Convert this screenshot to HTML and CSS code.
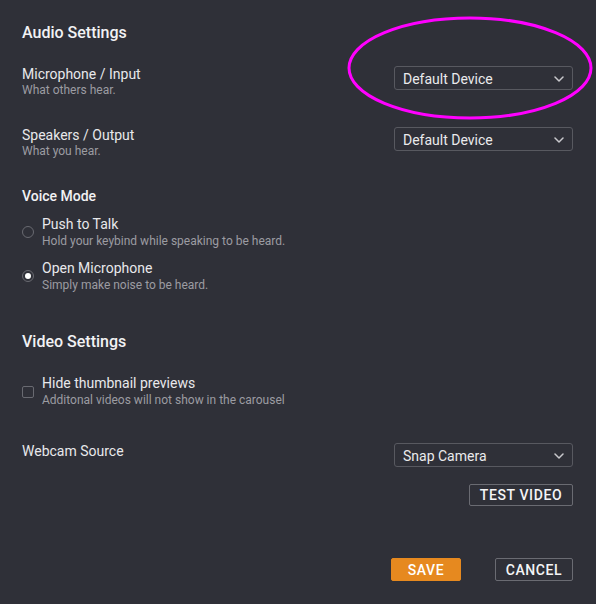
FILE: index.html
```html
<!DOCTYPE html>
<html lang="en">
<head>
<meta charset="utf-8">
<title>Settings</title>
<link rel="stylesheet" href="styles.css">
</head>
<body>
<main class="settings">
  <h2 class="section-title">Audio Settings</h2>

  <div class="field-row first-row">
    <div class="field-text">
      <div class="field-label">Microphone / Input</div>
      <div class="field-help">What others hear.</div>
    </div>
    <div class="select">
      <span class="select-value">Default Device</span>
      <svg class="chevron" width="10" height="6" viewBox="0 0 10 6"><polyline points="1,1 5,5 9,1" fill="none" stroke="#c9c9cd" stroke-width="1.5" stroke-linecap="round" stroke-linejoin="round"/></svg>
    </div>
  </div>

  <div class="field-row">
    <div class="field-text">
      <div class="field-label">Speakers / Output</div>
      <div class="field-help">What you hear.</div>
    </div>
    <div class="select">
      <span class="select-value">Default Device</span>
      <svg class="chevron" width="10" height="6" viewBox="0 0 10 6"><polyline points="1,1 5,5 9,1" fill="none" stroke="#c9c9cd" stroke-width="1.5" stroke-linecap="round" stroke-linejoin="round"/></svg>
    </div>
  </div>

  <h3 class="group-title">Voice Mode</h3>
  <div class="option-list">
    <div class="option">
      <span class="radio"></span>
      <div class="field-text">
        <div class="field-label">Push to Talk</div>
        <div class="field-help">Hold your keybind while speaking to be heard.</div>
      </div>
    </div>
    <div class="option">
      <span class="radio checked"></span>
      <div class="field-text">
        <div class="field-label">Open Microphone</div>
        <div class="field-help">Simply make noise to be heard.</div>
      </div>
    </div>
  </div>

  <h2 class="section-title video-title">Video Settings</h2>
  <div class="option checkbox-option">
    <span class="checkbox"></span>
    <div class="field-text">
      <div class="field-label">Hide thumbnail previews</div>
      <div class="field-help">Additonal videos will not show in the carousel</div>
    </div>
  </div>

  <div class="field-row webcam-row">
    <div class="field-text">
      <div class="field-label">Webcam Source</div>
    </div>
    <div class="select">
      <span class="select-value">Snap Camera</span>
      <svg class="chevron" width="10" height="6" viewBox="0 0 10 6"><polyline points="1,1 5,5 9,1" fill="none" stroke="#c9c9cd" stroke-width="1.5" stroke-linecap="round" stroke-linejoin="round"/></svg>
    </div>
  </div>

  <div class="test-row">
    <button class="btn btn-outline btn-test">TEST VIDEO</button>
  </div>

  <div class="actions">
    <button class="btn btn-save">SAVE</button>
    <button class="btn btn-outline btn-cancel">CANCEL</button>
  </div>
</main>

<svg class="annotation" width="250" height="106" viewBox="0 0 250 106">
  <ellipse cx="124" cy="52" rx="121" ry="50" fill="none" stroke="#ff00ff" stroke-width="3"/>
</svg>
</body>
</html>
```

FILE: styles.css
```css
* {
  box-sizing: border-box;
}

html, body {
  margin: 0;
  padding: 0;
  background: #2f3038;
  height: 100%;
}

body {
  font-family: Roboto, "Liberation Sans", sans-serif;
  color: #e6e6e9;
  position: relative;
}

.settings {
  padding: 23px 23px 0 22px;
  display: flex;
  flex-direction: column;
}

.section-title {
  margin: 0;
  font-size: 16px;
  line-height: 20px;
  font-weight: 500;
  color: #f2f2f4;
}

.video-title {
  margin-top: 40px;
}

.group-title {
  margin: 30px 0 0;
  font-size: 14px;
  line-height: 16px;
  font-weight: 500;
  color: #f2f2f4;
}

.field-row {
  display: flex;
  justify-content: space-between;
  align-items: flex-start;
  margin-top: 30px;
}

.first-row {
  margin-top: 23px;
}

.webcam-row {
  margin-top: 36px;
}

.field-label {
  font-size: 14px;
  line-height: 16px;
  color: #e8e8eb;
}

.field-help {
  margin-top: 1px;
  font-size: 12px;
  line-height: 14px;
  color: #9c9ca2;
}

.option .field-help {
  margin-top: 2px;
}

.select {
  width: 179px;
  height: 24px;
  border: 1px solid #585960;
  border-radius: 3px;
  display: flex;
  align-items: center;
  justify-content: space-between;
  padding: 2px 8px 0 8px;
}

.select-value {
  font-size: 14px;
  line-height: 16px;
  color: #eaeaec;
}

.chevron {
  display: block;
}

.option-list {
  margin-top: 12px;
  display: flex;
  flex-direction: column;
  gap: 12px;
}

.option {
  display: flex;
  align-items: center;
  gap: 8px;
}

.checkbox-option {
  margin-top: 23px;
}

.radio {
  width: 12px;
  height: 12px;
  border: 1px solid #696a71;
  border-radius: 50%;
  flex: none;
  display: flex;
  align-items: center;
  justify-content: center;
}

.radio.checked::after {
  content: "";
  width: 6px;
  height: 6px;
  border-radius: 50%;
  background: #ffffff;
}

.checkbox {
  width: 12px;
  height: 12px;
  border: 1px solid #696a71;
  border-radius: 2px;
  flex: none;
  margin-top: 1px;
}

.test-row {
  display: flex;
  justify-content: flex-end;
  margin-top: 17px;
}

.btn {
  font-family: Roboto, "Liberation Sans", sans-serif;
  font-size: 14px;
  font-weight: 500;
  letter-spacing: 0.6px;
  line-height: 16px;
  color: #f4f4f6;
  background: transparent;
  border: 1px solid #6a6b72;
  border-radius: 2px;
  padding: 0;
  display: flex;
  align-items: center;
  justify-content: center;
}

.btn-test {
  width: 104px;
  height: 22px;
}

.actions {
  display: flex;
  justify-content: flex-end;
  gap: 34px;
  margin-top: 52px;
}

.btn-save {
  width: 70px;
  height: 23px;
  background: #e6891f;
  border-color: #e6891f;
  color: #ffffff;
}

.btn-cancel {
  width: 78px;
  height: 23px;
}

.annotation {
  position: absolute;
  left: 346px;
  top: 16px;
  pointer-events: none;
}
```
